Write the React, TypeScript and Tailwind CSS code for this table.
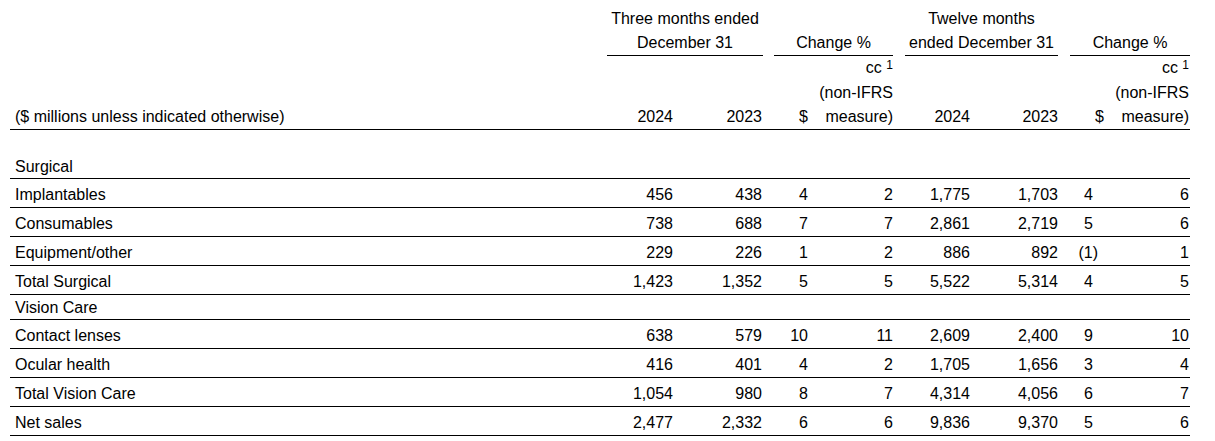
import React from 'react';

type Row = { label: string; v: string[]; section?: boolean };

const rows: Row[] = [
  { label: 'Surgical', v: [], section: true },
  { label: 'Implantables', v: ['456', '438', '4', '2', '1,775', '1,703', '4', '6'] },
  { label: 'Consumables', v: ['738', '688', '7', '7', '2,861', '2,719', '5', '6'] },
  { label: 'Equipment/other', v: ['229', '226', '1', '2', '886', '892', '(1)', '1'] },
  { label: 'Total Surgical', v: ['1,423', '1,352', '5', '5', '5,522', '5,314', '4', '5'] },
  { label: 'Vision Care', v: [], section: true },
  { label: 'Contact lenses', v: ['638', '579', '10', '11', '2,609', '2,400', '9', '10'] },
  { label: 'Ocular health', v: ['416', '401', '4', '2', '1,705', '1,656', '3', '4'] },
  { label: 'Total Vision Care', v: ['1,054', '980', '8', '7', '4,314', '4,056', '6', '7'] },
  { label: 'Net sales', v: ['2,477', '2,332', '6', '6', '9,836', '9,370', '5', '6'] },
];

const cell = 'border-b border-black pt-[4px] pb-0 leading-[24px]';

function NumCells({ v }: { v: string[] }) {
  return (
    <>
      <td className={`${cell} text-right pr-[1px]`}>{v[0]}</td>
      <td className={`${cell} text-right pr-[1px]`}>{v[1]}</td>
      <td className={cell}></td>
      <td className={`${cell} text-right pr-[1px]`}>{v[2]}</td>
      <td className={`${cell} text-right`}>{v[3]}</td>
      <td className={cell}></td>
      <td className={`${cell} text-right pr-[1px]`}>{v[4]}</td>
      <td className={`${cell} text-right`}>{v[5]}</td>
      <td className={cell}></td>
      <td className={`${cell} text-right ${v[6].startsWith('(') ? 'pr-[7px]' : 'pr-[12px]'}`}>{v[6]}</td>
      <td className={`${cell} text-right pr-[1px]`}>{v[7]}</td>
    </>
  );
}

function CcHead() {
  return (
    <>
      <div className="leading-[23px]">
        cc <span className="relative -top-[4px] text-[12px]">1</span>
      </div>
      <div>(non-IFRS</div>
      <div>measure)</div>
    </>
  );
}

export default function App() {
  return (
    <div className="w-[1215px] h-[441px] bg-white text-black font-['Liberation_Sans',Arial,sans-serif] text-[16px] pt-[1px] pl-[10px]">
      <table className="w-[1180px] table-fixed border-separate border-spacing-0">
        <colgroup>
          <col className="w-[597px]" />
          <col className="w-[67px]" />
          <col className="w-[89px]" />
          <col className="w-[11px]" />
          <col className="w-[35px]" />
          <col className="w-[84px]" />
          <col className="w-[12px]" />
          <col className="w-[66px]" />
          <col className="w-[87px]" />
          <col className="w-[12px]" />
          <col className="w-[35px]" />
          <col className="w-[85px]" />
        </colgroup>
        <thead>
          <tr className="align-bottom leading-[24px]">
            <th className="pt-[6px]"></th>
            <th colSpan={2} className="pt-[6px] font-normal text-center border-b border-black">
              Three months ended
              <br />
              December 31
            </th>
            <th></th>
            <th colSpan={2} className="font-normal text-center border-b border-black">
              Change %
            </th>
            <th></th>
            <th colSpan={2} className="pt-[6px] font-normal text-center border-b border-black">
              Twelve months
              <br />
              ended December 31
            </th>
            <th></th>
            <th colSpan={2} className="font-normal text-center border-b border-black">
              Change %
            </th>
          </tr>
          <tr className="align-bottom leading-[24px]">
            <th className="font-normal text-left pl-[5px] border-b border-black">
              ($ millions unless indicated otherwise)
            </th>
            <th className="font-normal text-right pr-[1px] border-b border-black">2024</th>
            <th className="font-normal text-right pr-[1px] border-b border-black">2023</th>
            <th className="border-b border-black"></th>
            <th className="font-normal text-right pr-[1px] border-b border-black">$</th>
            <th className="font-normal text-right border-b border-black">
              <CcHead />
            </th>
            <th className="border-b border-black"></th>
            <th className="font-normal text-right pr-[1px] border-b border-black">2024</th>
            <th className="font-normal text-right border-b border-black">2023</th>
            <th className="border-b border-black"></th>
            <th className="font-normal text-right pr-[1px] border-b border-black">$</th>
            <th className="font-normal text-right pr-[1px] border-b border-black">
              <CcHead />
            </th>
          </tr>
        </thead>
        <tbody>
          <tr>
            <td colSpan={12} className="h-[24px]"></td>
          </tr>
          {rows.map((r) =>
            r.section ? (
              <tr key={r.label}>
                <td colSpan={12} className="border-b border-black pl-[5px] pt-[1px] leading-[23px]">
                  {r.label}
                </td>
              </tr>
            ) : (
              <tr key={r.label}>
                <td className={`${cell} pl-[5px]`}>{r.label}</td>
                <NumCells v={r.v} />
              </tr>
            )
          )}
        </tbody>
      </table>
    </div>
  );
}
